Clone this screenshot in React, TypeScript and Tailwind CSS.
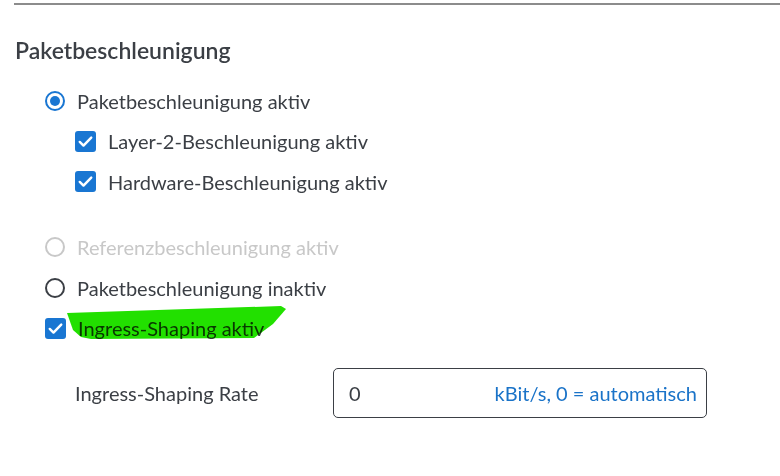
import React from "react";

function Radio({ checked, disabled }: { checked?: boolean; disabled?: boolean }) {
  const ring = disabled ? "border-[#c8c8c8]" : checked ? "border-[#1976d2]" : "border-[#3b3f45]";
  return (
    <span className={`flex h-[20px] w-[20px] shrink-0 items-center justify-center rounded-full border-2 ${ring}`}>
      {checked && <span className="h-[10px] w-[10px] rounded-full bg-[#1976d2]" />}
    </span>
  );
}

function Check() {
  return (
    <span className="flex h-[21px] w-[21px] shrink-0 items-center justify-center rounded-[3px] bg-[#1976d2]">
      <svg width="17" height="17" viewBox="0 0 16 16" fill="none">
        <path d="M2.6 8.4l3.5 3.4L13.4 4.3" stroke="#fff" strokeWidth="2.3" strokeLinecap="round" strokeLinejoin="round" />
      </svg>
    </span>
  );
}

export default function App() {
  return (
    <div className="h-[476px] w-[780px] bg-white pt-[3px] text-[20px] text-[#3b3f45]" style={{ fontFamily: "Lato, 'Noto Sans', sans-serif" }}>
      <div className="ml-[14px] h-[2px] bg-[#8c8c8c]" />

      <h2 className="ml-[15px] mt-[32px] h-[26px] text-[23px] font-semibold leading-[26px] text-[#3b3f45]">
        Paketbeschleunigung
      </h2>

      <div className="mt-[18px] flex flex-col">
        {/* Paketbeschleunigung aktiv */}
        <label className="ml-[45px] flex h-[40px] items-center gap-[12px]">
          <Radio checked />
          <span>Paketbeschleunigung aktiv</span>
        </label>
        <label className="ml-[75px] flex h-[40px] items-center gap-[12px]">
          <Check />
          <span>Layer-2-Beschleunigung aktiv</span>
        </label>
        <label className="ml-[75px] flex h-[41px] items-center gap-[12px]">
          <Check />
          <span>Hardware-Beschleunigung aktiv</span>
        </label>

        <label className="ml-[45px] mt-[25px] flex h-[40px] items-center gap-[12px] text-[#c8c8c8]">
          <Radio disabled />
          <span>Referenzbeschleunigung aktiv</span>
        </label>
        <label className="ml-[45px] flex h-[41px] items-center gap-[12px]">
          <Radio />
          <span>Paketbeschleunigung inaktiv</span>
        </label>
        <label className="relative ml-[45px] flex h-[40px] items-center gap-[12px]">
          <Check />
          <span>Ingress-Shaping aktiv</span>
          {/* highlighter mark */}
          <svg className="pointer-events-none absolute left-[21px] top-[-2px] mix-blend-multiply" width="225" height="36" viewBox="0 0 225 36">
            <path d="M1 7 L215 0 L220 3 L207 18 L188 32 L25 33 L15 31 L7 24 Z" fill="#22e000" />
          </svg>
        </label>

        <div className="mt-[20px] flex h-[50px] items-center">
          <span className="ml-[75px] w-[258px]">Ingress-Shaping Rate</span>
          <div className="flex h-[50px] w-[374px] items-center justify-between rounded-[5px] border border-[#3b3f45] pl-[15px] pr-[9px]">
            <span>0</span>
            <span className="text-[#1a73c8]">kBit/s, 0 = automatisch</span>
          </div>
        </div>
      </div>
    </div>
  );
}
